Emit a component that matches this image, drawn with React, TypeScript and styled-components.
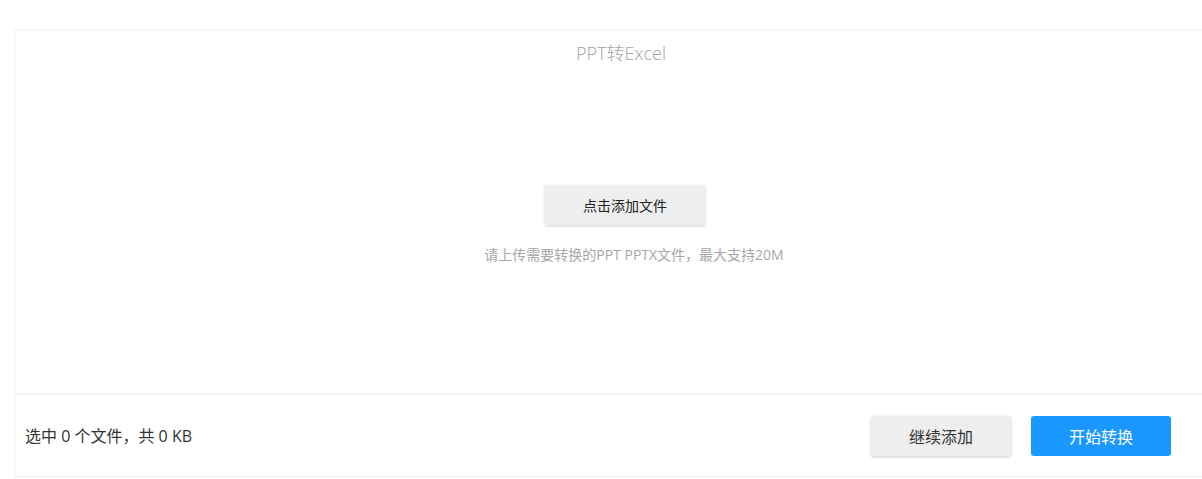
import styled, { createGlobalStyle } from "styled-components";

const GlobalStyle = createGlobalStyle`
  html, body {
    margin: 0;
    padding: 0;
    overflow: hidden;
    background: #fff;
    font-family: "Open Sans", "Noto Sans CJK SC", sans-serif;
  }
`

const Page = styled.div`
  padding: 29px 0 0 14px;
  width: 1240px;
`
const Panel = styled.div`
  width: 1212px;
  border: 1px solid #f2f2f2;
  display: flex;
  flex-direction: column;
`
const UploadArea = styled.div`
  height: 365px;
  border-bottom: 2px solid #f2f2f2;
  display: flex;
  flex-direction: column;
  align-items: center;
  box-sizing: border-box;
  padding-top: 11px;
`
const Title = styled.h1`
  margin: 0;
  font-size: 18px;
  font-weight: 300;
  line-height: 24px;
  color: #a3a3a3;
`
const AddButton = styled.button`
  margin: 120px 0 0 8px;
  width: 160px;
  height: 40px;
  border: none;
  background: #eeeeee;
  box-shadow: 0 1px 3px rgba(0, 0, 0, 0.18);
  font-family: inherit;
  font-size: 14px;
  color: #222;
  cursor: pointer;
`
const Tip = styled.p`
  margin: 20px 0 0 26px;
  font-size: 14px;
  line-height: 20px;
  color: #a6a6a6;
`
const Footer = styled.div`
  height: 81px;
  display: flex;
  align-items: center;
  justify-content: space-between;
  padding: 0 56px 0 10px;
`
const Summary = styled.span`
  font-size: 16px;
  color: #333;
  margin-top: -2px;
`
const Actions = styled.div`
  display: flex;
  gap: 20px;
`
const ActionButton = styled.button<{ primary?: boolean }>`
  width: 140px;
  height: 40px;
  border: none;
  border-radius: ${p => (p.primary ? "3px" : "2px")};
  background: ${p => (p.primary ? "#1a98ff" : "#eeeeee")};
  color: ${p => (p.primary ? "#fff" : "#333")};
  box-shadow: ${p => (p.primary ? "none" : "0 1px 3px rgba(0, 0, 0, 0.2)")};
  font-family: inherit;
  font-size: 16px;
  cursor: pointer;
`

const App = () => {
  return (
    <Page>
      <GlobalStyle />
      <Panel>
        <UploadArea>
          <Title>PPT转Excel</Title>
          <AddButton>点击添加文件</AddButton>
          <Tip>请上传需要转换的PPT PPTX文件，最大支持20M</Tip>
        </UploadArea>
        <Footer>
          <Summary>选中 0 个文件，共 0 KB</Summary>
          <Actions>
            <ActionButton>继续添加</ActionButton>
            <ActionButton primary>开始转换</ActionButton>
          </Actions>
        </Footer>
      </Panel>
    </Page>
  )
}
export default App
